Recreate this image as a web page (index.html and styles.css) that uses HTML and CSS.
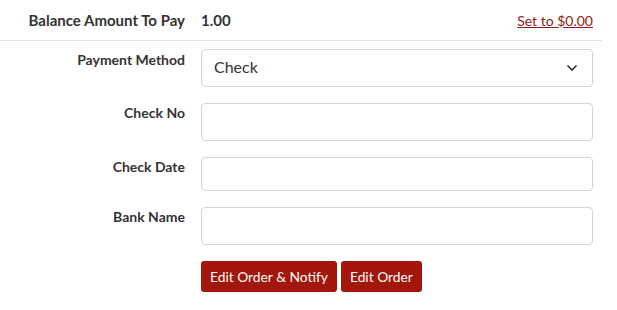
FILE: index.html
```html
<!DOCTYPE html>
<html lang="en">
<head>
  <meta charset="UTF-8">
  <title>Edit Order - Payment</title>
  <link rel="stylesheet" href="styles.css">
</head>
<body>
  <div class="payment">
    <div class="balance">
      <div class="label">Balance Amount To Pay</div>
      <div class="amount">1.00</div>
      <a href="#" class="reset">Set to $0.00</a>
    </div>

    <form class="fields">
      <label class="label first">Payment Method</label>
      <div class="select-wrap">
        <select name="method">
          <option>Check</option>
          <option>Cash</option>
          <option>Credit Card</option>
        </select>
        <svg class="chevron" width="12" height="8" viewBox="0 0 12 8">
          <path d="M1.5 1.5 L6 6 L10.5 1.5" fill="none" stroke="#333" stroke-width="1.6"/>
        </svg>
      </div>

      <label class="label">Check No</label>
      <input type="text" name="check_no">

      <label class="label">Check Date</label>
      <input type="text" name="check_date" class="short">

      <label class="label">Bank Name</label>
      <input type="text" name="bank_name">

      <div></div>
      <div class="actions">
        <button type="submit">Edit Order &amp; Notify</button>
        <button type="submit">Edit Order</button>
      </div>
    </form>
  </div>
</body>
</html>
```

FILE: styles.css
```css
body {
  font-family: 'Lato', sans-serif;
  font-size: 14px;
  color: #333;
  background: #fff;
  margin: 0;
}
.payment {
  width: 602px;
}
.label {
  font-weight: 700;
  text-align: right;
  line-height: 20px;
}
.balance {
  display: grid;
  grid-template-columns: 185px auto 1fr;
  column-gap: 16px;
  align-items: center;
  height: 40px;
  border-bottom: 1px solid #dee2e6;
}
.balance .label,
.amount {
  font-size: 15px;
  font-weight: 700;
}
.reset {
  justify-self: end;
  margin-right: 9px;
  color: #8f1b14;
  text-decoration: underline;
}
.fields {
  display: grid;
  grid-template-columns: 185px 392px;
  column-gap: 16px;
  row-gap: 16px;
  padding-top: 8px;
}
.fields .first {
  padding-top: 1px;
}
.select-wrap {
  position: relative;
}
select, input {
  display: block;
  box-sizing: border-box;
  width: 100%;
  height: 38px;
  margin: 0;
  padding: 0 12px;
  font-family: 'Lato', sans-serif;
  font-size: 16px;
  color: #333;
  background: #fff;
  border: 1px solid #ced4da;
  border-radius: 4px;
}
select {
  padding-bottom: 3px;
  appearance: none;
  -webkit-appearance: none;
}
input.short {
  height: 34px;
}
.chevron {
  position: absolute;
  right: 15px;
  top: 15px;
  pointer-events: none;
}
.actions {
  display: flex;
  gap: 4px;
}
button {
  height: 31px;
  padding: 0 9px;
  font-family: 'Lato', sans-serif;
  font-size: 13.8px;
  color: #fff;
  background: #a3160b;
  border: none;
  border-radius: 3px;
  cursor: pointer;
}
```
